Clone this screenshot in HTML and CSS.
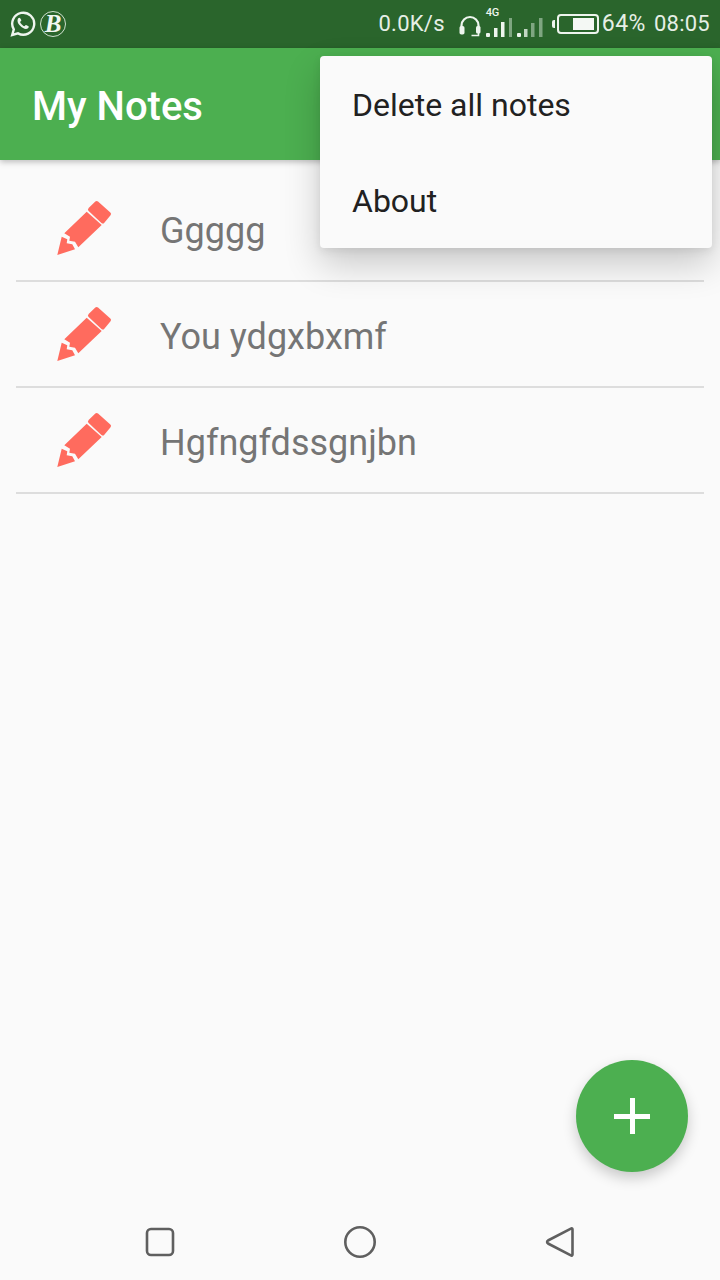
FILE: index.html
```html
<!DOCTYPE html>
<html lang="en">
<head>
<meta charset="utf-8">
<title>My Notes</title>
<link rel="stylesheet" href="styles.css">
</head>
<body>
<div class="screen">
  <header class="status">
    <div class="status-left">
      <svg class="ic-wa" viewBox="0 0 26 26"><path class="line" d="M2.200 24l1.600-5.600A11 11 0 1 1 8 22.400z"/><path class="solid" d="M9.300 6.800c-.5 0-1.700.7-1.800 2.600-.1 2 1.200 4 2.900 5.700 1.700 1.700 3.700 2.900 5.500 2.900 1.700 0 2.900-1.200 2.900-2.200 0-.4-2.400-1.900-3-1.800-.5.100-1 1.200-1.500 1.200-1.200-.2-4-2.900-4.200-4.200 0-.5 1.100-1 1.200-1.500.1-.6-1.100-2.700-2-2.700z"/></svg>
      <span class="b-badge">B</span>
    </div>
    <div class="status-right">
      <span class="st-text speed">0.0K/s</span>
      <svg class="ic-head" viewBox="0 0 24 22"><path class="line2" d="M3.500 14V10.500a8.500 8.500 0 0 1 17 0V14"/><rect class="solid" x="1.500" y="11" width="5" height="8.500" rx="1.800"/><path class="line3" d="M20.500 14v6.500h-7"/><rect class="solid" x="18" y="11" width="4.500" height="7.500" rx="1.500"/></svg>
      <span class="net">
        <span class="four-g">4G</span>
        <svg class="ic-signal" viewBox="0 0 58 20"><g class="solid"><rect x="0" y="16" width="4" height="4" rx="1"/><rect x="8" y="11" width="3.500" height="9"/><rect x="15" y="5" width="3.500" height="15"/></g><rect class="dim" x="23" y="1" width="3" height="19"/><g class="solid"><rect x="31" y="16" width="4" height="4" rx="1"/></g><rect class="dim2" x="38" y="12" width="3.500" height="8"/><g class="dim"><rect x="45" y="6" width="3.500" height="14"/><rect x="53" y="1" width="3.500" height="19"/></g></svg>
      </span>
      <span class="battery"><span class="batt-nub"></span><span class="batt-body"><span class="batt-fill"></span></span></span>
      <span class="st-text pct">64%</span>
      <span class="st-text clock">08:05</span>
    </div>
  </header>
  <div class="appbar"><h1 class="title">My Notes</h1></div>
  <main class="list">
    <div class="row">
      <svg class="pencil" viewBox="0 0 56 56"><path d="M30.700 11.700L45.700 25 22.300 47.300 19 41.700l-5.700-1 .7-4-5.700-3.400z"/><path d="M5.700 36.700l5.600 2.600-.6 4 5.600 1 2.700 5L1.300 55z"/><path class="eraser" d="M34 9.500L40.700 3 53 14l-6.200 7.500z"/></svg>
      <span class="note">Ggggg</span>
    </div>
    <div class="row">
      <svg class="pencil" viewBox="0 0 56 56"><path d="M30.700 11.700L45.700 25 22.300 47.300 19 41.700l-5.700-1 .7-4-5.700-3.400z"/><path d="M5.700 36.700l5.600 2.600-.6 4 5.600 1 2.700 5L1.300 55z"/><path class="eraser" d="M34 9.500L40.700 3 53 14l-6.200 7.500z"/></svg>
      <span class="note">You ydgxbxmf</span>
    </div>
    <div class="row">
      <svg class="pencil" viewBox="0 0 56 56"><path d="M30.700 11.700L45.700 25 22.300 47.300 19 41.700l-5.700-1 .7-4-5.700-3.400z"/><path d="M5.700 36.700l5.600 2.600-.6 4 5.600 1 2.700 5L1.300 55z"/><path class="eraser" d="M34 9.500L40.700 3 53 14l-6.200 7.500z"/></svg>
      <span class="note">Hgfngfdssgnjbn</span>
    </div>
  </main>
  <nav class="navbar">
    <svg class="nav-ic" viewBox="0 0 32 32"><rect class="nav-stroke" x="3" y="3" width="26" height="26" rx="4"/></svg>
    <svg class="nav-ic" viewBox="0 0 32 32"><circle class="nav-stroke" cx="16" cy="16" r="14.700"/></svg>
    <svg class="nav-ic" viewBox="0 0 32 32"><path class="nav-stroke" d="M28.500 3.500c0-1-.8-1.300-1.600-.9L4 14.500c-1.200.7-1.200 2.300 0 3l22.900 11.900c.8.400 1.600.1 1.600-.9z"/></svg>
  </nav>
  <div class="menu">
    <div class="menu-item">Delete all notes</div>
    <div class="menu-item">About</div>
  </div>
  <button class="fab" aria-label="Add note"><span class="plus"></span></button>
</div>
</body>
</html>
```

FILE: styles.css
```css
* { box-sizing: border-box; }
html, body { margin: 0; padding: 0; }
body { font-family: Roboto, "Liberation Sans", sans-serif; background: #fafafa; }
.screen { position: relative; width: 720px; height: 1280px; display: flex; flex-direction: column; overflow: hidden; background: #fafafa; }

.status { height: 48px; flex: none; display: flex; justify-content: space-between; align-items: center; padding: 0 10px 0 10px; background: #2a652c; color: #e8f1e8; }
.status-left { display: flex; align-items: center; gap: 4px; }
.status-right { display: flex; align-items: center; }
.st-text { font-size: 22px; letter-spacing: .25px; line-height: 26px; color: #e6efe6; }
.line { fill: none; stroke: #eef5ee; stroke-width: 2.400; }
.line2 { fill: none; stroke: #eef5ee; stroke-width: 2.200; }
.line3 { fill: none; stroke: #eef5ee; stroke-width: 1.600; }
.solid { fill: #eef5ee; }
.dim { fill: #7fa681; }
.dim2 { fill: #c2d6c3; }
.ic-wa { width: 26px; height: 26px; }
.b-badge { width: 26px; height: 26px; border: 1px solid #cfe0cf; border-radius: 50%; display: flex; align-items: center; justify-content: center; font: italic bold 25px "Liberation Serif", serif; color: #f2f7f2; }
.speed { margin-right: 13px; }
.ic-head { width: 24px; height: 22px; margin-top: 3px; margin-right: 4px; }
.net { position: relative; display: block; width: 58px; height: 20px; margin-top: 5px; margin-right: 8px; }
.ic-signal { display: block; width: 58px; height: 20px; }
.four-g { position: absolute; left: 0; top: -10px; font-size: 11px; letter-spacing: -.3px; font-weight: 500; line-height: 12px; color: #eef5ee; }
.battery { display: flex; align-items: center; margin-right: 3px; }
.batt-nub { width: 3px; height: 8px; background: #eef5ee; border-radius: 2px 0 0 2px; margin-right: 2px; }
.batt-body { width: 42px; height: 20px; border: 2px solid #eef5ee; border-radius: 4px; padding: 2px 3px; display: flex; justify-content: flex-end; }
.batt-fill { width: 21px; background: #f4f8f4; }
.pct { font-size: 23px; letter-spacing: .5px; margin-right: 8px; }

.appbar { height: 112px; flex: none; display: flex; align-items: center; padding: 0 32px; background: #4caf50; box-shadow: 0 2px 6px rgba(0,0,0,.25); position: relative; z-index: 1; }
.title { margin: 0; padding-top: 5px; font-size: 40px; font-weight: 500; color: #fff; line-height: 46px; }

.list { flex: 1; padding: 16px 16px 0; }
.row { height: 106px; display: flex; align-items: center; border-bottom: 2px solid #dddddd; }
.pencil { width: 56px; height: 56px; flex: none; margin-left: 40px; margin-right: 48px; fill: #ff6b5e; }
.eraser { stroke: #ff6b5e; stroke-width: 4; stroke-linejoin: round; }
.note { font-size: 36px; color: #757575; line-height: 42px; padding-top: 5px; }

.navbar { height: 104px; flex: none; display: flex; align-items: center; justify-content: flex-start; gap: 168px; padding: 28px 0 0 144px; }
.nav-ic { width: 32px; height: 32px; }
.nav-stroke { fill: none; stroke: #5f5f5f; stroke-width: 2.600; }

.menu { position: absolute; left: 320px; top: 56px; width: 392px; height: 192px; background: #fafafa; border-radius: 4px; box-shadow: 0 16px 36px rgba(0,0,0,.2), 0 3px 8px rgba(0,0,0,.08); z-index: 2; }
.menu-item { height: 96px; display: flex; align-items: center; padding: 2px 0 0 32px; font-size: 32px; color: #212121; }

.fab { position: absolute; left: 576px; top: 1060px; width: 112px; height: 112px; border: 0; padding: 0; border-radius: 50%; background: #4caf50; box-shadow: 0 6px 14px rgba(0,0,0,.2); z-index: 2; }
.plus { position: absolute; left: 38px; top: 38px; width: 36px; height: 36px; background: linear-gradient(#fff,#fff) center/100% 5px no-repeat, linear-gradient(#fff,#fff) center/5px 100% no-repeat; }
```
